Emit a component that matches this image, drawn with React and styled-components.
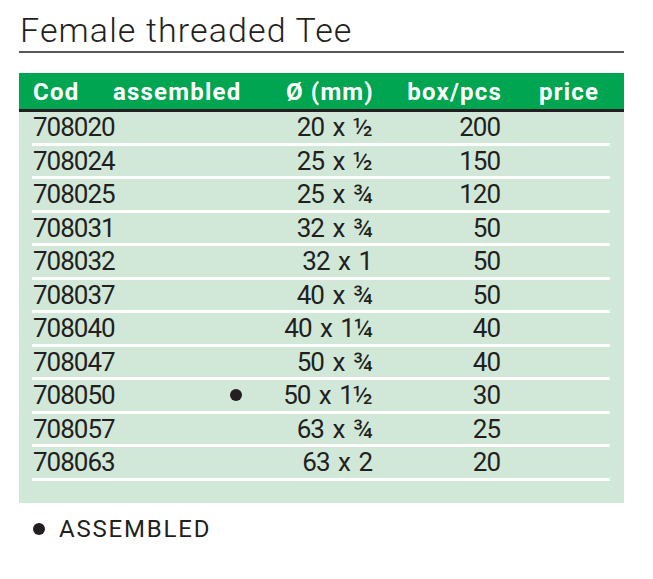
import React from "react";
import styled, { createGlobalStyle } from "styled-components";

const GlobalStyle = createGlobalStyle`
  body {
    margin: 0;
    background: #fff;
    font-family: Roboto, "DejaVu Sans", sans-serif;
    color: #231f20;
  }
`;

const Page = styled.div`
  width: 605px;
  padding: 0 0 0 19px;
`;

const Title = styled.h1`
  margin: 0;
  padding: 12px 0 3px 1px;
  font-size: 34px;
  line-height: 36px;
  font-weight: 300;
  letter-spacing: 1.1px;
  color: #231f20;
  border-bottom: 2px solid #58595b;
`;

const Table = styled.div`
  margin-top: 20px;
  background: #d1e8d8;
  padding-bottom: 22px;
`;

const Cols = styled.div`
  display: grid;
  grid-template-columns: 80px 130px 130px 128px 1fr;
  align-items: center;
`;

const Head = styled(Cols)`
  background: #00a551;
  height: 36px;
  padding-left: 14px;
  border-bottom: 3px solid #231f20;
  color: #fff;
  font-weight: 700;
  font-size: 24px;
  letter-spacing: 1.2px;
`;

const HeadCell = styled.div`
  text-align: ${(p) => p.$align || "left"};
  padding-left: ${(p) => p.$pad || 0}px;
  margin-right: ${(p) => (p.$align === "right" ? "-1px" : 0)};
  padding-top: 2px;
`;

const Row = styled(Cols)`
  height: 30.5px;
  margin: 0 14px 0 13px;
  border-bottom: 3px solid #fff;
  font-size: 26px;
  letter-spacing: -1px;
`;

const Cell = styled.div`
  padding-left: ${(p) => p.$pad || 0}px;
  display: flex;
  justify-content: ${(p) => (p.$align === "right" ? "flex-end" : "flex-start")};
  align-items: center;
  word-spacing: ${(p) => p.$words || 0}px;
`;

const Dot = styled.span`
  display: inline-block;
  width: 12px;
  height: 12px;
  border-radius: 50%;
  background: #231f20;
`;

const Legend = styled.div`
  display: flex;
  align-items: center;
  gap: 14px;
  padding: 12px 0 0 14px;
  font-size: 24px;
  letter-spacing: 1.8px;
`;

const rows = [
  ["708020", false, "20 x ½", "200"],
  ["708024", false, "25 x ½", "150"],
  ["708025", false, "25 x ¾", "120"],
  ["708031", false, "32 x ¾", "50"],
  ["708032", false, "32 x 1", "50"],
  ["708037", false, "40 x ¾", "50"],
  ["708040", false, "40 x 1¼", "40"],
  ["708047", false, "50 x ¾", "40"],
  ["708050", true, "50 x 1½", "30"],
  ["708057", false, "63 x ¾", "25"],
  ["708063", false, "63 x 2", "20"],
];

export default function App() {
  return (
    <>
      <GlobalStyle />
      <Page>
        <Title>Female threaded Tee</Title>
        <Table>
          <Head>
            <HeadCell>Cod</HeadCell>
            <HeadCell>assembled</HeadCell>
            <HeadCell $align="right">Ø (mm)</HeadCell>
            <HeadCell $align="right">box/pcs</HeadCell>
            <HeadCell $pad={38}>price</HeadCell>
          </Head>
          {rows.map(([code, asm, size, box]) => (
            <Row key={code}>
              <Cell $pad={1}>{code}</Cell>
              <Cell $align="right">{asm && <Dot />}</Cell>
              <Cell $align="right" $words={3}>{size}</Cell>
              <Cell $align="right">{box}</Cell>
              <Cell />
            </Row>
          ))}
        </Table>
        <Legend>
          <Dot />
          <span>ASSEMBLED</span>
        </Legend>
      </Page>
    </>
  );
}
